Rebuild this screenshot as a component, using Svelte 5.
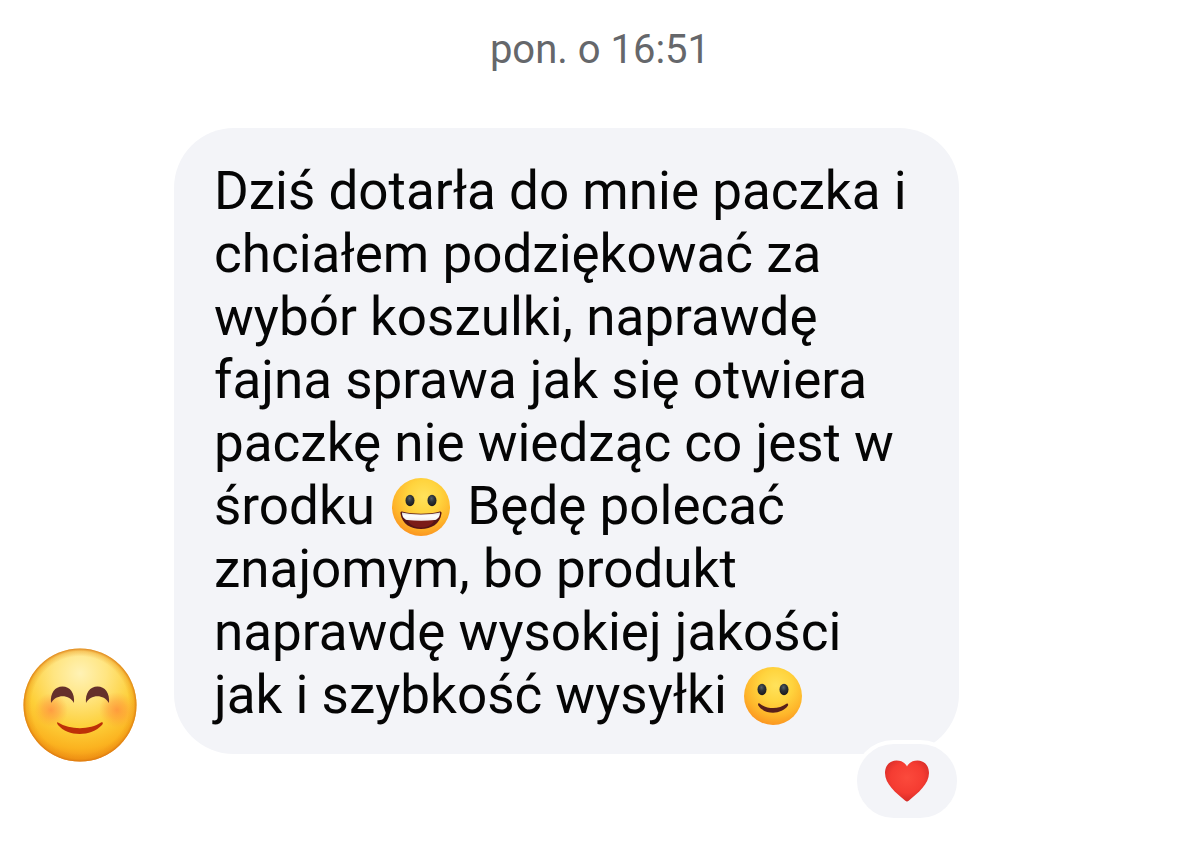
<script>
  const before = 'Dziś dotarła do mnie paczka i chciałem podziękować za wybór koszulki, naprawdę fajna sprawa jak się otwiera paczkę nie wiedząc co jest w środku ';
  const after = ' Będę polecać znajomym, bo produkt naprawdę wysokiej jakości jak i szybkość wysyłki ';
</script>

<svelte:head><title>Wiadomość</title></svelte:head>

<svg class="defs" aria-hidden="true">
  <defs>
    <radialGradient id="avatarFace" cx="50%" cy="22%" r="78%">
      <stop offset="0" stop-color="#fff2b5" />
      <stop offset="0.3" stop-color="#ffe581" />
      <stop offset="0.62" stop-color="#fdcf38" />
      <stop offset="0.85" stop-color="#fbb320" />
      <stop offset="1" stop-color="#f29114" />
    </radialGradient>
    <radialGradient id="avatarRim">
      <stop offset="0.86" stop-color="#e88a10" stop-opacity="0" />
      <stop offset="0.95" stop-color="#e88a10" stop-opacity="0.35" />
      <stop offset="1" stop-color="#d87410" stop-opacity="0.85" />
    </radialGradient>
    <radialGradient id="blush">
      <stop offset="0" stop-color="#ff7a3c" stop-opacity="0.62" />
      <stop offset="0.5" stop-color="#ff8a3c" stop-opacity="0.4" />
      <stop offset="1" stop-color="#ff9a3c" stop-opacity="0" />
    </radialGradient>
    <radialGradient id="face" cx="55%" cy="32%" r="70%">
      <stop offset="0" stop-color="#ffe25c" />
      <stop offset="0.4" stop-color="#ffd43e" />
      <stop offset="0.75" stop-color="#feb52a" />
      <stop offset="1" stop-color="#fb9320" />
    </radialGradient>
    <linearGradient id="teeth" x1="0" y1="0" x2="0" y2="1">
      <stop offset="0" stop-color="#d9d9da" />
      <stop offset="0.4" stop-color="#ffffff" />
      <stop offset="1" stop-color="#f1eeee" />
    </linearGradient>
    <radialGradient id="eye" cx="45%" cy="32%" r="65%">
      <stop offset="0" stop-color="#566068" />
      <stop offset="0.45" stop-color="#2d343a" />
      <stop offset="1" stop-color="#1c1b1d" />
    </radialGradient>
    <radialGradient id="heart" cx="50%" cy="42%" r="62%">
      <stop offset="0" stop-color="#fb4a3c" />
      <stop offset="0.6" stop-color="#f53c32" />
      <stop offset="0.88" stop-color="#dc2f2a" />
      <stop offset="1" stop-color="#b92522" />
    </radialGradient>
  </defs>
</svg>

<main>
  <time>pon. o 16:51</time>

  <div class="message">
    <svg class="avatar" viewBox="0 0 114 114" role="img" aria-label="😊">
      <circle cx="57" cy="57" r="56.5" fill="url(#avatarFace)" />
      <circle cx="57" cy="57" r="56.5" fill="url(#avatarRim)" />
      <circle cx="28" cy="62" r="17" fill="url(#blush)" />
      <circle cx="94" cy="62" r="18" fill="url(#blush)" />
      <path d="M28 55C27 45 32 38.500 39.500 38.500C47 38.500 52 45 51 55C47 47 34 45 28 55Z" fill="#65302b" />
      <path d="M63 55C62 45 67 38.500 74.500 38.500C82 38.500 87 45 86 55C80 45 67 47 63 55Z" fill="#65302b" />
      <path d="M35 74.500C47 82 67 82 78 74.500C80 73.500 80.500 75 79 77C68 89 45 89 35 77C33.500 75 34 74 35 74.500Z" fill="#bd3008" />
    </svg>

    <div class="bubble">
      <p>
        {before}<svg class="emoji" viewBox="0 0 58 58" role="img" aria-label="😀">
          <circle cx="29" cy="29" r="29" fill="url(#face)" />
          <ellipse cx="18" cy="22.500" rx="4.500" ry="5.700" fill="url(#eye)" />
          <ellipse cx="40" cy="22.500" rx="4.500" ry="5.700" fill="url(#eye)" />
          <path d="M10 33.500C20 36.500 38 36.500 48 33.500C49 33.200 49.800 34 49.500 35.500C48 46 39.500 51 29 51C18.500 51 10 46 8.500 35.500C8.200 34 9 33.200 10 33.500Z" fill="#561516" />
          <path d="M16 43C21 39.500 37 39.500 42 43C39 48 34 49.500 29 49.500C24 49.500 19 48 16 43Z" fill="#7b1c18" />
          <path d="M10 34.500C20 37 38 37 48 34.500C48.200 38 46 41.500 43 42C34 43 24 43 15 42C12 41.500 9.800 38 10 34.500Z" fill="url(#teeth)" />
        </svg>{after}<svg class="emoji" viewBox="0 0 58 58" role="img" aria-label="🙂">
          <circle cx="29" cy="29" r="29" fill="url(#face)" />
          <ellipse cx="18" cy="22.500" rx="4.500" ry="5.700" fill="url(#eye)" />
          <ellipse cx="40" cy="22.500" rx="4.500" ry="5.700" fill="url(#eye)" />
          <path d="M15.500 36.500C23 42.500 35 42.500 42.500 36.800C43.700 36.200 44.500 37 44 38.500C38 48 20 48 14.300 38.500C13.600 37 14.500 35.900 15.500 36.500Z" fill="#59201a" />
        </svg>
      </p>
      <button class="reaction" type="button" aria-label="Reakcja: serce">
        <svg viewBox="0 0 44 42" aria-hidden="true">
          <path d="M22 6.500C24 2.500 28 0.500 32.500 0.500C39 0.500 44 5.500 44 13C44 24 33 33 24 40.500C22.500 41.700 21.500 41.700 20 40.500C11 33 0 24 0 13C0 5.500 5 0.500 11.500 0.500C16 0.500 20 2.500 22 6.500Z" fill="url(#heart)" />
        </svg>
      </button>
    </div>
  </div>
</main>

<style>
  :global(body) {
    margin: 0;
    background: #ffffff;
  }

  .defs {
    position: absolute;
    width: 0;
    height: 0;
  }

  main {
    box-sizing: border-box;
    padding: 26px 23px 88px;
    font-family: Roboto, "Noto Sans", sans-serif;
  }

  time {
    display: block;
    text-align: center;
    font-size: 40px;
    line-height: 48px;
    color: #65676b;
  }

  .message {
    display: flex;
    align-items: flex-end;
    gap: 37px;
    margin-top: 54px;
  }

  .avatar {
    flex: none;
    width: 114px;
    height: 114px;
    margin-bottom: -8px;
  }

  .bubble {
    position: relative;
    box-sizing: border-box;
    max-width: 785px;
    padding: 32px 40px 27px;
    border-radius: 60px;
    background: #f3f4f8;
  }

  p {
    margin: 0;
    font-size: 53px;
    line-height: 63px;
    color: #050505;
  }

  .emoji {
    width: 58px;
    height: 58px;
    margin: 0 4px;
    vertical-align: -12px;
  }

  .reaction {
    position: absolute;
    right: -2px;
    bottom: -68px;
    display: flex;
    align-items: center;
    justify-content: center;
    box-sizing: border-box;
    width: 108px;
    height: 82px;
    padding: 0;
    border: 4px solid #ffffff;
    border-radius: 41px;
    background: #f3f4f8;
  }

  .reaction svg {
    width: 44px;
    height: 42px;
  }
</style>
